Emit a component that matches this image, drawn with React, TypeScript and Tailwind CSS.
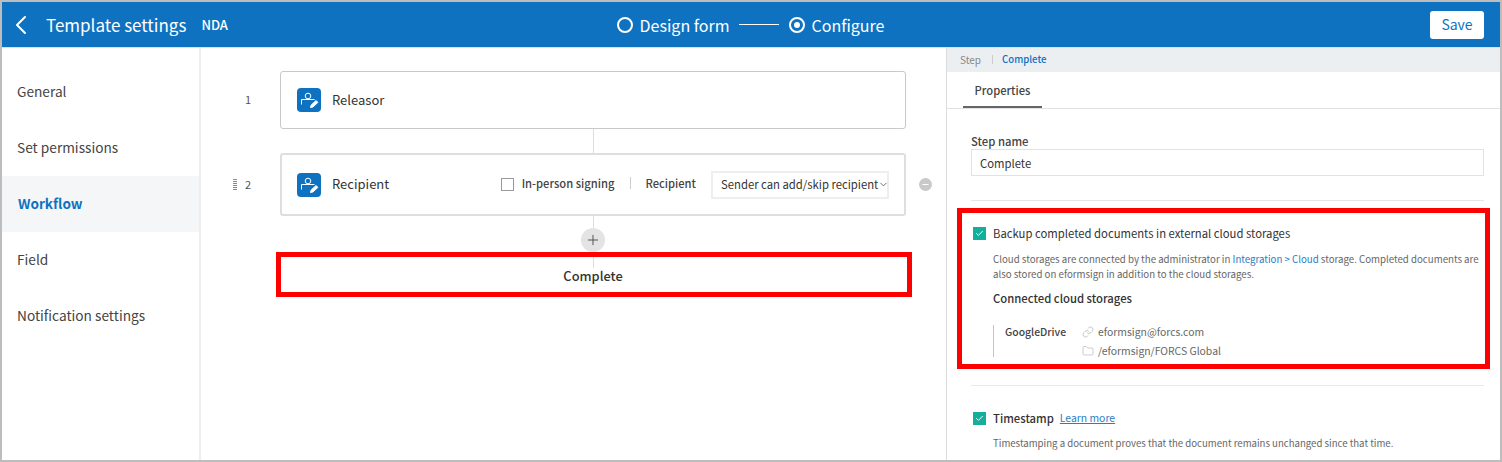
import { ChevronLeft, Link as LinkIcon, Folder, Check, ChevronDown, Plus, Minus } from 'lucide-react';

const FONT = '[font-family:"Noto_Sans_CJK_KR","Noto_Sans",sans-serif]';

function StepIcon() {
  return (
    <span className="flex h-6 w-6 shrink-0 items-center justify-center rounded-sm bg-[#0e72c1]">
      <svg width="24" height="24" viewBox="0 0 24 24" fill="none" stroke="#fff" strokeWidth="1">
        <circle cx="11" cy="8" r="2.8" />
        <path d="M4.5 16.5v-5h13" />
        <path d="M13.5 19.5l.6-2.4 5-4.6 1.8 1.9-5 4.6z" fill="#fff" />
      </svg>
    </span>
  );
}

function GreenCheck() {
  return (
    <span className="flex h-[13px] w-[13px] shrink-0 items-center justify-center bg-[#14ae9c]">
      <Check size={9} color="#fff" strokeWidth={2.5} />
    </span>
  );
}

const navItems = ['General', 'Set permissions', 'Workflow', 'Field', 'Notification settings'];

export default function App() {
  return (
    <div className={`${FONT} relative flex h-[462px] w-[1502px] flex-col overflow-hidden border-2 border-[#bdbdbd] bg-white text-[#333]`}>
      {/* Top bar */}
      <header className="flex h-[45px] shrink-0 items-center justify-between bg-[#0e72c1] pr-[16px] text-white">
        <div className="flex w-[515px] items-center">
          <ChevronLeft size={32} strokeWidth={1.5} className="ml-[3px]" />
          <span className="ml-[9px] text-[17px]">Template settings</span>
          <span className="ml-[15px] text-[13px] font-medium">NDA</span>
        </div>
        <div className="flex items-center text-[16px]">
          <span className="h-4 w-4 rounded-full border-2 border-white" />
          <span className="ml-[7px]">Design form</span>
          <span className="mx-[10px] h-px w-10 bg-white" />
          <span className="flex h-4 w-4 items-center justify-center rounded-full border-2 border-white">
            <span className="h-[6px] w-[6px] rounded-full bg-white" />
          </span>
          <span className="ml-[6px]">Configure</span>
        </div>
        <div className="flex w-[500px] justify-end">
          <button className="h-[28px] w-[54px] rounded-[3px] bg-white text-[14px] text-[#0e72c1]">Save</button>
        </div>
      </header>

      <div className="flex min-h-0 flex-1 border-t border-[#cfe3f3]">
        {/* Sidebar */}
        <nav className="w-[199px] shrink-0 border-r-2 border-[#eeeeee] pt-4">
          {navItems.map((item) => (
            <div
              key={item}
              className={
                item === 'Workflow'
                  ? 'flex h-14 items-center bg-[#f5f6f8] pb-[1px] pl-4 text-[13.6px] font-bold text-[#0e72c1]'
                  : 'flex h-14 items-center pb-[1px] pl-[15px] text-[13.7px] text-[#444]'
              }
            >
              {item}
            </div>
          ))}
        </nav>

        {/* Workflow canvas */}
        <main className="w-[745px] shrink-0 pt-[23px]">
          <div className="flex">
            <div className="flex w-[79px] items-center justify-end pb-[1px] pr-[29px] text-[11px] text-[#555]">1</div>
            <div className="flex h-[58px] w-[626px] items-center rounded-[3px] border border-[#c9c9c9] pl-4">
              <StepIcon />
              <span className="ml-[11px] text-[13px]">Releasor</span>
            </div>
          </div>
          <div className="ml-[392px] h-6 w-px bg-[#dcdcdc]" />
          <div className="flex">
            <div className="flex w-[79px] items-center justify-end gap-[8px] pr-[29px] text-[11px] text-[#555]">
              <span className="h-[12px] w-[4px] bg-[repeating-linear-gradient(to_bottom,#8a8a8a_0,#8a8a8a_1px,#ffffff_1px,#ffffff_2px)]" />
              2
            </div>
            <div className="flex h-[63px] w-[626px] items-center whitespace-nowrap rounded-[3px] border-2 border-[#dedede] pl-[15px] pr-[15px]">
              <StepIcon />
              <span className="mb-[1px] ml-[11px] text-[13px]">Recipient</span>
              <span className="mb-[1px] ml-auto h-[13px] w-[13px] shrink-0 border border-[#999] bg-white" />
              <span className="mb-[3px] ml-2 text-[11.2px] font-medium text-[#444]">In-person signing</span>
              <span className="mb-[3px] ml-4 h-3 w-px bg-[#ccc]" />
              <span className="mb-[3px] ml-[14px] text-[11.2px] font-medium text-[#444]">Recipient</span>
              <div className="ml-[15px] flex h-[28px] w-[178px] shrink-0 items-center justify-between border-2 border-[#eeeeee] pl-2 pr-[1px] text-[11.3px] text-[#333]">
                <span>Sender can add/skip recipient</span>
                <ChevronDown size={11} strokeWidth={1.5} className="shrink-0" />
              </div>
            </div>
            <div className="flex items-center pl-[13px]">
              <span className="flex h-[13px] w-[13px] items-center justify-center rounded-full bg-[#c9c9c9]">
                <Minus size={9} color="#fff" strokeWidth={3} />
              </span>
            </div>
          </div>
          <div className="ml-[392px] h-[12px] w-px bg-[#dcdcdc]" />
          <div className="ml-[380px] flex h-6 w-6 items-center justify-center rounded-full bg-[#e4e4e4]">
            <Plus size={16} color="#555" strokeWidth={1.5} />
          </div>
          <div className="ml-[392px] h-[16px] w-px bg-[#dcdcdc]" />
          <div className="ml-[79px] flex h-4 w-[626px] items-center justify-center text-[12.8px] font-medium text-[#333]">
            Complete
          </div>
        </main>

        {/* Properties panel */}
        <aside className="min-w-0 flex-1 overflow-hidden border-l border-[#dcdcdc]">
          <div className="flex h-6 items-center bg-[#eceff2] pb-[1px] pl-[13px] text-[10px]">
            <span className="text-[#888]">Step</span>
            <span className="ml-[11px] h-[9px] w-px bg-[#ccc]" />
            <span className="ml-[9px] text-[9.6px] font-medium text-[#0e72c1]">Complete</span>
          </div>
          <div className="flex h-[37px] border-b border-[#e2e2e2] pl-4">
            <div className="flex w-[79px] items-center justify-center border-b-2 border-[#666] pt-[2px] text-[11.2px] font-medium text-[#444]">
              Properties
            </div>
          </div>
          <div className="pl-6 pr-[16px] pt-6">
            <label className="block text-[11.3px] font-medium leading-[16px] text-[#444]">Step name</label>
            <div className="flex h-[27px] items-center border border-[#e2e2e2] pl-2 pt-[1px] text-[11.3px] text-[#333]">Complete</div>
            <div className="mt-6 border-t border-[#e6e6e6]" />

            <div className="flex items-center pl-[2px] pt-6 leading-[16px]">
              <GreenCheck />
              <span className="ml-[7px] text-[11.3px] text-[#333]">Backup completed documents in external cloud storages</span>
            </div>
            <div className="ml-[22px] mt-[11px] text-[9.68px] leading-[15px] text-[#666]">
              Cloud storages are connected by the administrator in <span className="text-[#2b7cc4]">Integration &gt; Cloud</span> storage. Completed documents are also stored on eformsign in addition to the cloud storages.
            </div>
            <div className="ml-[22px] mt-2 text-[11.3px] font-medium leading-[16px] text-[#333]">Connected cloud storages</div>
            <div className="ml-[22px] mt-4 flex h-[39px] text-[10.4px] leading-[19px]">
              <span className="mt-[3px] h-[32px] w-px bg-[#c4c4c4]" />
              <span className="ml-[11px] w-[77px] font-medium text-[#444]">GoogleDrive</span>
              <div className="text-[#666]">
                <div className="flex items-center gap-1"><LinkIcon size={12} strokeWidth={1} className="text-[#999]" />eformsign@forcs.com</div>
                <div className="flex items-center gap-1"><Folder size={12} strokeWidth={1} className="text-[#999]" />/eformsign/FORCS Global</div>
              </div>
            </div>
            <div className="mt-6 border-t border-[#e9e9e9]" />
            <div className="flex items-center pl-[2px] pt-6 leading-[16px]">
              <GreenCheck />
              <span className="ml-[7px] text-[11.3px] font-medium text-[#333]">Timestamp</span>
              <span className="ml-[6px] text-[10.4px] text-[#2b7cc4] underline">Learn more</span>
            </div>
            <div className="ml-[22px] mt-[10px] text-[9.62px] leading-[15px] text-[#666]">
              Timestamping a document proves that the document remains unchanged since that time.
            </div>
          </div>
        </aside>
      </div>

      {/* Red callout frames drawn over the screenshot */}
      <div className="pointer-events-none absolute left-[274px] top-[250px] h-[45px] w-[636px] border-[5px] border-[#ff0000]" />
      <div className="pointer-events-none absolute left-[955px] top-[206px] h-[161px] w-[533px] border-[5px] border-[#ff0000]" />
    </div>
  );
}
